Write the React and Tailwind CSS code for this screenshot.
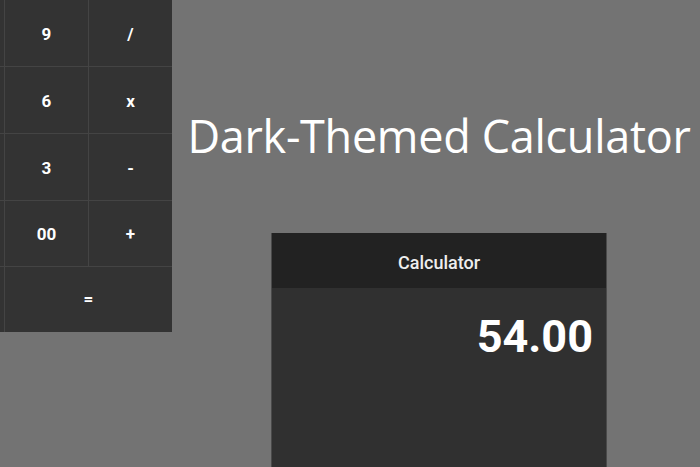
import React from "react";

const rows = [
  ["", "9", "/"],
  ["", "6", "x"],
  ["", "3", "-"],
  ["", "00", "+"],
];

export default function App() {
  return (
    <div className="w-[700px] h-[467px] overflow-hidden bg-[#737373] flex" style={{ fontFamily: "Roboto, 'Liberation Sans', sans-serif" }}>
      {/* keypad, partly off screen */}
      <div className="-ml-[79px] grid grid-cols-[83px_83px_83px] grid-rows-[66px_66px_66px_65px_65px] gap-px bg-[#444] self-start shrink-0">
        {rows.flat().map((k, i) => (
          <button key={i} className="bg-[#333] text-white text-[17px] font-bold flex items-center justify-center pt-[3px]">
            {k}
          </button>
        ))}
        <button className="bg-[#333]" />
        <button className="col-span-2 bg-[#333] text-white text-[17px] font-bold flex items-center justify-center">
          =
        </button>
      </div>

      <div className="w-[522px] shrink-0 ml-[6px] flex flex-col items-center">
        <h1
          className="mt-[106px] text-[45px] leading-[60px] tracking-[-0.3px] text-white whitespace-nowrap"
          style={{ fontFamily: "'Open Sans', 'Noto Sans', sans-serif" }}
        >
          Dark-Themed Calculator
        </h1>

        <div className="mt-[67px] w-[336px] h-[260px] bg-[#303030] border-x border-[#4a4a4a]">
          <div className="h-[55px] pt-[3px] bg-[#222] flex items-center justify-center text-[#eee] text-[18px] font-medium">
            Calculator
          </div>
          <div className="px-[13px] pt-[22px] text-right text-white text-[45px] font-bold leading-[54px]">
            54.00
          </div>
        </div>
      </div>
    </div>
  );
}
